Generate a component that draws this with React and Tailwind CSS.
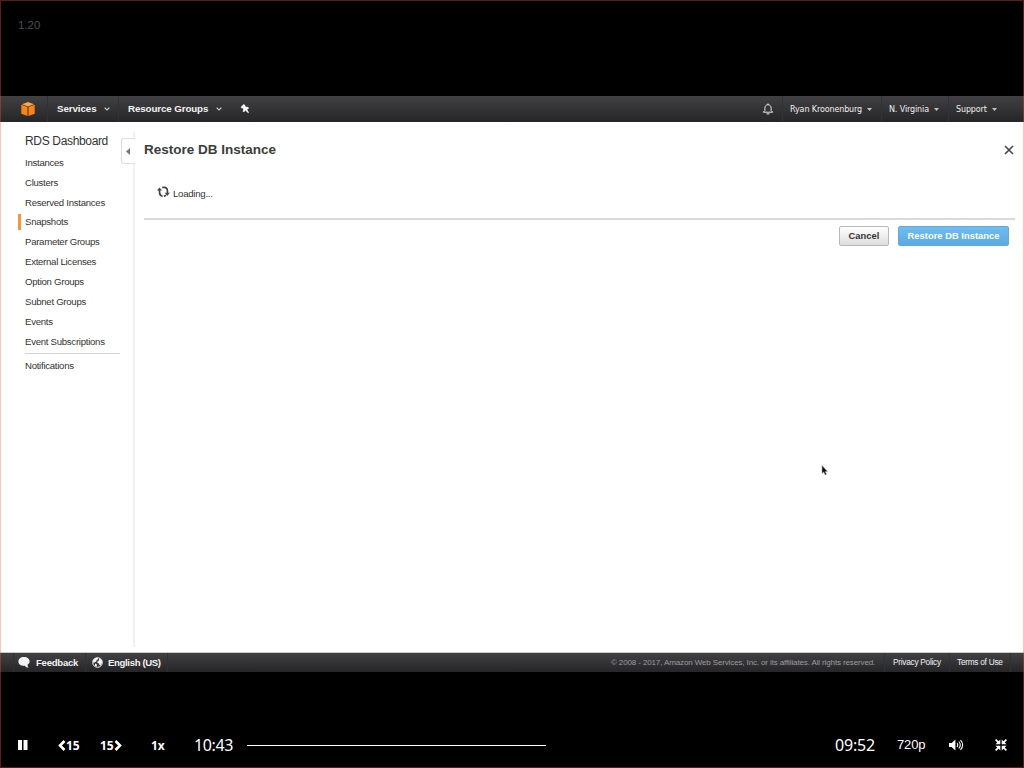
import React from "react";

const navLinks = [
  "Instances",
  "Clusters",
  "Reserved Instances",
  "Snapshots",
  "Parameter Groups",
  "External Licenses",
  "Option Groups",
  "Subnet Groups",
  "Events",
  "Event Subscriptions",
];

function Chevron({ className }) {
  return (
    <svg className={className} width="6" height="4" viewBox="0 0 6 4" fill="none" stroke="#c8c8c8" strokeWidth="1.2">
      <path d="M.6.6 3 3 5.4.6" />
    </svg>
  );
}

function Caret({ className }) {
  return (
    <svg className={className} width="5" height="3" viewBox="0 0 5 3" fill="#c4c4c4">
      <path d="M0 0h5L2.5 3z" />
    </svg>
  );
}

function TopBar() {
  return (
    <header className="flex h-[26px] shrink-0 items-center bg-linear-to-b from-[#414042] to-[#262527] text-[#f2f2f2]">
      <div className="flex h-full w-[47px] items-center pl-[21px]">
        <svg width="14" height="14" viewBox="0 0 14 14">
          <path d="M7 0 13 2.2 7 4.4 1 2.2z" fill="#fba64a" />
          <path d="M.3 2.7 6.5 4.9V14L.3 11.8z" fill="#f98518" />
          <path d="M13.7 2.7 7.5 4.9V14l6.2-2.2z" fill="#f98518" />
        </svg>
      </div>
      <div className="flex h-full w-[71px] items-center border-l border-[#323133] pl-[9px]">
        <span className="mt-px w-[47px] text-[9.8px] tracking-[-.1px] font-bold">Services</span>
        <Chevron />
      </div>
      <div className="flex h-full w-[118px] items-center border-l border-[#323133] pl-[9px]">
        <span className="mt-px w-[88px] text-[9.8px] tracking-[-.13px] font-bold whitespace-nowrap">Resource Groups</span>
        <Chevron />
      </div>
      <svg className="ml-[4px]" width="9" height="10" viewBox="0 0 9 10" fill="#fff" stroke="#fff" strokeWidth=".5">
        <path d="M3.6.6 1 3.1l.5 1 1.2-.1.9 1.2-.6 2 .8.8 1.7-1.8L8.2 8.9 8.6 8.6 6.9 5.3 8.5 4.5 8.2 3.3 6 3.1 4.9 2.2 4.8 1z" />
      </svg>
      <div className="ml-auto flex h-full items-center font-['DejaVu_Sans'] text-[8px] tracking-[-.12px] whitespace-nowrap text-[#f0f0f0]">
        <svg className="mr-[8px]" width="12" height="12" viewBox="0 0 12 12" fill="none" stroke="#e8e8e8" strokeWidth="1">
          <path d="M1.3 9.2h9.4L9.1 7.5V5C9.1 3.1 7.8 1.7 6 1.7S2.9 3.1 2.9 5v2.5z" strokeLinejoin="round" />
          <path d="M6 .5v1.2M4.9 10.2a1.1 1.1 0 0 0 2.2 0" />
        </svg>
        <div className="flex h-full w-[99px] items-center border-l border-[#323133] pl-[7px]">
          <span className="mt-[2px] w-[77px]">Ryan Kroonenburg</span>
          <Caret />
        </div>
        <div className="flex h-full w-[67px] items-center border-l border-[#323133] pl-[7px]">
          <span className="mt-[2px] w-[45px]">N. Virginia</span>
          <Caret />
        </div>
        <div className="flex h-full w-[76px] items-center border-l border-[#323133] pl-[7px]">
          <span className="mt-[2px] w-[36px]">Support</span>
          <Caret />
        </div>
      </div>
    </header>
  );
}

function Sidebar() {
  return (
    <aside className="w-[133px] shrink-0 pt-[10px] text-[9.6px] tracking-[-.27px] text-[#333]">
      <h2 className="ml-[25px] h-[21px] text-[12px] leading-[19px] tracking-[-.34px]">RDS Dashboard</h2>
      <ul>
        {navLinks.map((label) => (
          <li key={label} className="flex h-[19.85px] items-center">
            <span className={label === "Snapshots" ? "ml-[18px] h-[16px] w-[3px] bg-[#f5963c]" : "ml-[18px] h-[16px] w-[3px]"} />
            <span className="ml-[4px] leading-[12px]">{label}</span>
          </li>
        ))}
      </ul>
      <div className="mt-[2px] ml-[25px] w-[95px] border-t border-[#d4d4d4] pt-[5px] leading-[14px]">Notifications</div>
    </aside>
  );
}

function Content() {
  return (
    <main className="relative mt-[10px] mb-[5px] flex-1 border-l-2 border-[#f0f0f0] pr-[9px] pl-[9px]">
      <div className="absolute top-[6px] -left-[14px] flex h-[26px] w-[14px] items-center rounded-l-[3px] border border-r-0 border-[#dedede] bg-white pl-[4px]">
        <svg width="4" height="7" viewBox="0 0 4 7" fill="#777">
          <path d="M4 0v7L0 3.5z" />
        </svg>
      </div>
      <div className="flex h-[36px] items-center justify-between">
        <h1 className="text-[13.5px] font-bold text-[#3c3c3c]">Restore DB Instance</h1>
        <svg className="mr-[1px]" width="10" height="10" viewBox="0 0 10 10" stroke="#444" strokeWidth="1.6">
          <path d="m1 1 8 8M9 1 1 9" />
        </svg>
      </div>
      <div className="flex h-[52px] items-start border-b-2 border-[#dadada] pt-[17px] pl-[13px] text-[9.6px] tracking-[-.25px] text-[#333]">
        <svg className="mt-[1px] mr-[3px]" width="13" height="12" viewBox="0 0 13 12">
          <g fill="none" stroke="#444" strokeWidth="1.7">
            <path d="M5.6 10.1C3.2 10 2.4 8 2.5 5V3.8M5.2 1.3h2C9.6 1.3 10.4 3 10.4 5v2.2M9 9.4 6.8 10.2" />
          </g>
          <path d="M0 4.6h5L2.5 1.4zM7.8 6.8h5L10.3 10z" fill="#444" />
        </svg>
        <span className="mt-[3px] leading-[12px]">Loading...</span>
      </div>
      <div className="flex justify-end gap-[9px] pt-[6px] pr-[6px] text-[9.3px] font-bold">
        <button className="h-[20px] w-[50px] rounded-[2px] border border-[#b9b9b9] bg-linear-to-b from-white to-[#dddddf] pt-px tracking-[.1px] text-[#333]">Cancel</button>
        <button className="h-[20px] w-[111px] rounded-[2px] border border-[#5fabdf] bg-linear-to-b from-[#70bdf0] to-[#5aa9e0] pt-px tracking-[.05px] whitespace-nowrap text-white">Restore DB Instance</button>
      </div>
    </main>
  );
}

function FooterBar() {
  return (
    <footer className="flex h-[20px] shrink-0 items-center border-t border-[#c9c9cb] bg-linear-to-b from-[#414042] to-[#262527] text-[9.6px] tracking-[-.27px] whitespace-nowrap text-[#f2f2f2]">
      <div className="ml-[13px] flex h-full w-[72px] items-center border-l border-[#323133] pl-[4px] font-bold">
        <svg className="mr-[6px]" width="12" height="11" viewBox="0 0 12 11" fill="#f2f2f2">
          <path d="M6 0C2.7 0 .4 1.9.4 4.4.4 6.9 2.7 8.8 6 8.8h.8C7.6 10 9 10.8 10.6 10.8 9.8 9.8 9.5 8.8 9.6 7.6 10.9 6.8 11.6 5.7 11.6 4.4 11.6 1.9 9.3 0 6 0z" />
        </svg>
        <span className="mt-px">Feedback</span>
      </div>
      <div className="flex h-full w-[83px] items-center border-x border-[#323133] pl-[6px] font-bold">
        <svg className="mr-[5px] shrink-0" width="11" height="11" viewBox="0 0 11 11">
          <circle cx="5.5" cy="5.5" r="4.8" fill="#39383a" stroke="#f2f2f2" strokeWidth="1" />
          <path d="M.8 4C1.5 1.8 3.6.6 6 .8L5.8 2.4 4.6 3.2 4.2 4.6 2.6 5.2 1.8 6.4zM7 .9 9.9 3.2 10.2 5.6 8.6 8.4 7.3 7.8 7.1 6.4 5.4 6 5.5 4.2 7 3.6zM3 6.6 5 7.6 4.6 9.6 3 9z" fill="#f2f2f2" />
        </svg>
        <span className="mt-px tracking-[-.36px]">English (US)</span>
      </div>
      <div className="ml-auto flex h-full items-center text-[8.3px]">
        <span className="mr-[8px] w-[265px] text-[8px] tracking-[-.125px] text-[#9c9c9c]">© 2008 - 2017, Amazon Web Services, Inc. or its affiliates. All rights reserved.</span>
        <span className="flex h-full w-[65px] items-center border-l border-[#323133] pl-[8px]">Privacy Policy</span>
        <span className="flex h-full w-[62px] items-center border-x border-[#323133] pl-[7px]">Terms of Use</span>
        <span className="w-[13px]" />
      </div>
    </footer>
  );
}

function PlayerControls() {
  return (
    <div className="flex h-[46px] items-center pl-[18px] font-['Noto_Sans'] text-[12px] font-bold text-white">
      <svg className="w-[40px] shrink-0" width="40" height="10" viewBox="0 0 40 10" fill="#fff">
        <path d="M0 0h4v10H0zM5.5 0h4v10h-4z" />
      </svg>
      <div className="flex w-[42px] items-center">
        <svg width="8" height="11" viewBox="0 0 8 11" fill="none" stroke="#fff" strokeWidth="2.6">
          <path d="M6.5 1 2 5.5 6.5 10" />
        </svg>
        <span className="mt-[2px]">15</span>
      </div>
      <div className="flex w-[51px] items-center">
        <span className="mt-[2px]">15</span>
        <svg width="8" height="11" viewBox="0 0 8 11" fill="none" stroke="#fff" strokeWidth="2.6">
          <path d="M1.5 1 6 5.5 1.5 10" />
        </svg>
      </div>
      <span className="mt-[2px] w-[43px]">1x</span>
      <span className="w-[53px] text-[16px] tracking-[-.35px] font-normal">10:43</span>
      <div className="h-px w-[299px] bg-white" />
      <span className="ml-auto w-[62px] text-[16px] tracking-[-.2px] font-normal">09:52</span>
      <span className="w-[52px] font-['Liberation_Sans'] text-[13px] tracking-[-.15px] font-normal">720p</span>
      <svg className="mr-[31px]" width="15" height="12" viewBox="0 0 15 12">
        <path d="M0 4h2.6L6.4.5v11L2.6 8H0z" fill="#fff" />
        <path d="M8 4q1.5 2 0 4M9.8 2.5q3 3.5 0 7M11.5 1.2q4.3 4.8 0 9.6" fill="none" stroke="#fff" strokeWidth="1.1" />
      </svg>
      <svg className="mr-[17px]" width="12" height="12" viewBox="0 0 12 12" fill="#fff">
        <path d="M0 1.2 1.2 0l2.3 2.3L5.3.4V5.3H.4l1.9-1.8zM12 1.2 10.8 0 8.5 2.3 6.7.4V5.3h4.9L9.7 3.5zM0 10.8 1.2 12l2.3-2.3 1.8 1.9V6.7H.4l1.9 1.8zM12 10.8 10.8 12 8.5 9.7 6.7 11.6V6.7h4.9L9.7 8.5z" />
      </svg>
    </div>
  );
}

export default function App() {
  return (
    <div className="relative flex h-[768px] w-[1024px] flex-col overflow-hidden bg-black font-['Liberation_Sans',sans-serif]">
      <div className="h-[96px] shrink-0 pt-[17px] pl-[18px] text-[11.5px] leading-[16px] text-[#4c4c4c]">1.20</div>
      <TopBar />
      <div className="flex h-[530px] shrink-0 bg-white">
        <Sidebar />
        <Content />
      </div>
      <FooterBar />
      <div className="mt-auto">
        <PlayerControls />
      </div>
      <svg className="absolute top-[465px] left-[821px]" width="8" height="12" viewBox="0 0 8 12">
        <path d="M1 .5v8l1.8-1.6 1.3 3 1.4-.6-1.3-2.9h2.4z" fill="#111" stroke="#aaa" strokeWidth=".5" />
      </svg>
      <div className="pointer-events-none absolute inset-0 border border-[#ff5a32]/35" />
    </div>
  );
}
